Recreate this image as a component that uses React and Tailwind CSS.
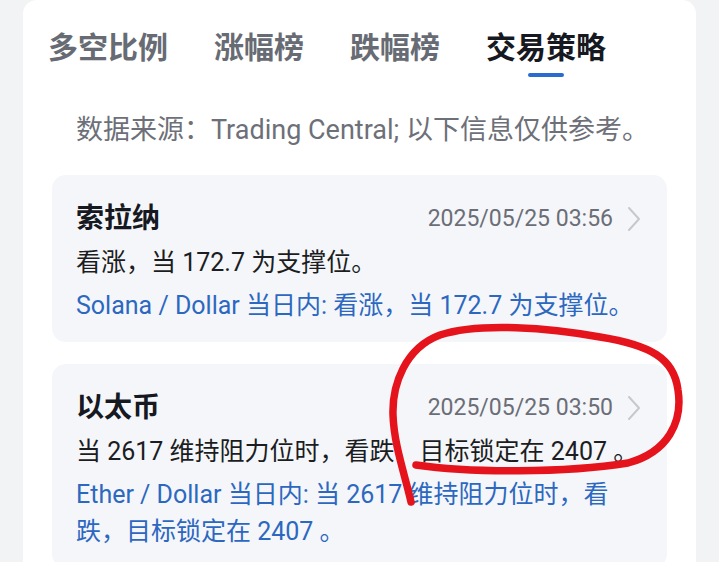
const FONT = { fontFamily: 'Roboto, "Noto Sans CJK SC", sans-serif' }

const tabs = ['多空比例', '涨幅榜', '跌幅榜', '交易策略']

const items = [
  {
    name: '索拉纳',
    time: '2025/05/25 03:56',
    summary: '看涨，当 172.7 为支撑位。',
    detail: 'Solana / Dollar 当日内: 看涨，当 172.7 为支撑位。',
  },
  {
    name: '以太币',
    time: '2025/05/25 03:50',
    summary: '当 2617 维持阻力位时，看跌，目标锁定在 2407 。',
    detail: 'Ether / Dollar 当日内: 当 2617 维持阻力位时，看跌，目标锁定在 2407 。',
  },
]

function Chevron() {
  return (
    <svg viewBox="0 0 14 26" className="w-[14px] h-[26px] shrink-0" fill="none" stroke="#c6c8cd" strokeWidth="2" strokeLinecap="round" strokeLinejoin="round">
      <path d="M2 2l10 11L2 24" />
    </svg>
  )
}

function StrategyCard({ item }) {
  return (
    <div className="rounded-[14px] bg-[#f5f6fa] pl-[24px] pr-[26px] pt-[27px] pb-[18px]">
      <div className="flex items-center justify-between">
        <div className="text-[28px] leading-[34px] font-bold text-[#16191f]">{item.name}</div>
        <div className="flex items-center gap-[14px]">
          <span className="text-[23px] leading-[34px] text-[#6b6e76]">{item.time}</span>
          <Chevron />
        </div>
      </div>
      <div className="mt-[10px] text-[25px] leading-[34px] text-[#1b1d22]">{item.summary}</div>
      <div className="mt-[7px] text-[25px] leading-[37px] text-[#2c68c0]">{item.detail}</div>
    </div>
  )
}

export default function App() {
  return (
    <div className="relative h-[562px] overflow-hidden bg-[#f2f3f5] px-[23px]" style={FONT}>
      <div className="h-full rounded-t-[14px] bg-white">
        {/* Tabs */}
        <div className="flex items-start gap-[46px] pl-[25px] pt-[28px]">
          {tabs.map((t, i) => {
            const active = i === tabs.length - 1
            return (
              <div key={t} className="flex flex-col items-center">
                <div className={`text-[30px] leading-[40px] font-bold ${active ? 'text-[#16191f]' : 'text-[#676b74]'}`}>{t}</div>
                {active && <div className="mt-[5px] h-[4px] w-[36px] rounded-full bg-[#2b6bd1]" />}
              </div>
            )
          })}
        </div>

        {/* Source note */}
        <div className="mt-[37px] pl-[53px] text-[27px] leading-[32px] text-[#6d7078]">
          数据来源：Trading Central; 以下信息仅供参考。
        </div>

        {/* Cards */}
        <div className="mt-[29px] mx-[29px] flex flex-col gap-[22px]">
          {items.map(it => <StrategyCard key={it.name} item={it} />)}
        </div>
      </div>

      {/* Hand-drawn annotation */}
      <svg className="pointer-events-none absolute inset-0" width="719" height="562" viewBox="0 0 719 562" fill="none">
        <path
          d="M416 465 C470 473 565 473 628 463 C668 452 683 422 678 390 C674 358 650 345 600 337 C550 328 480 322 440 335 C405 348 392 385 393 415 C394 445 405 475 411 502"
          stroke="#e5141c" strokeWidth="7.5" strokeLinecap="round" strokeLinejoin="round"
        />
      </svg>
    </div>
  )
}
